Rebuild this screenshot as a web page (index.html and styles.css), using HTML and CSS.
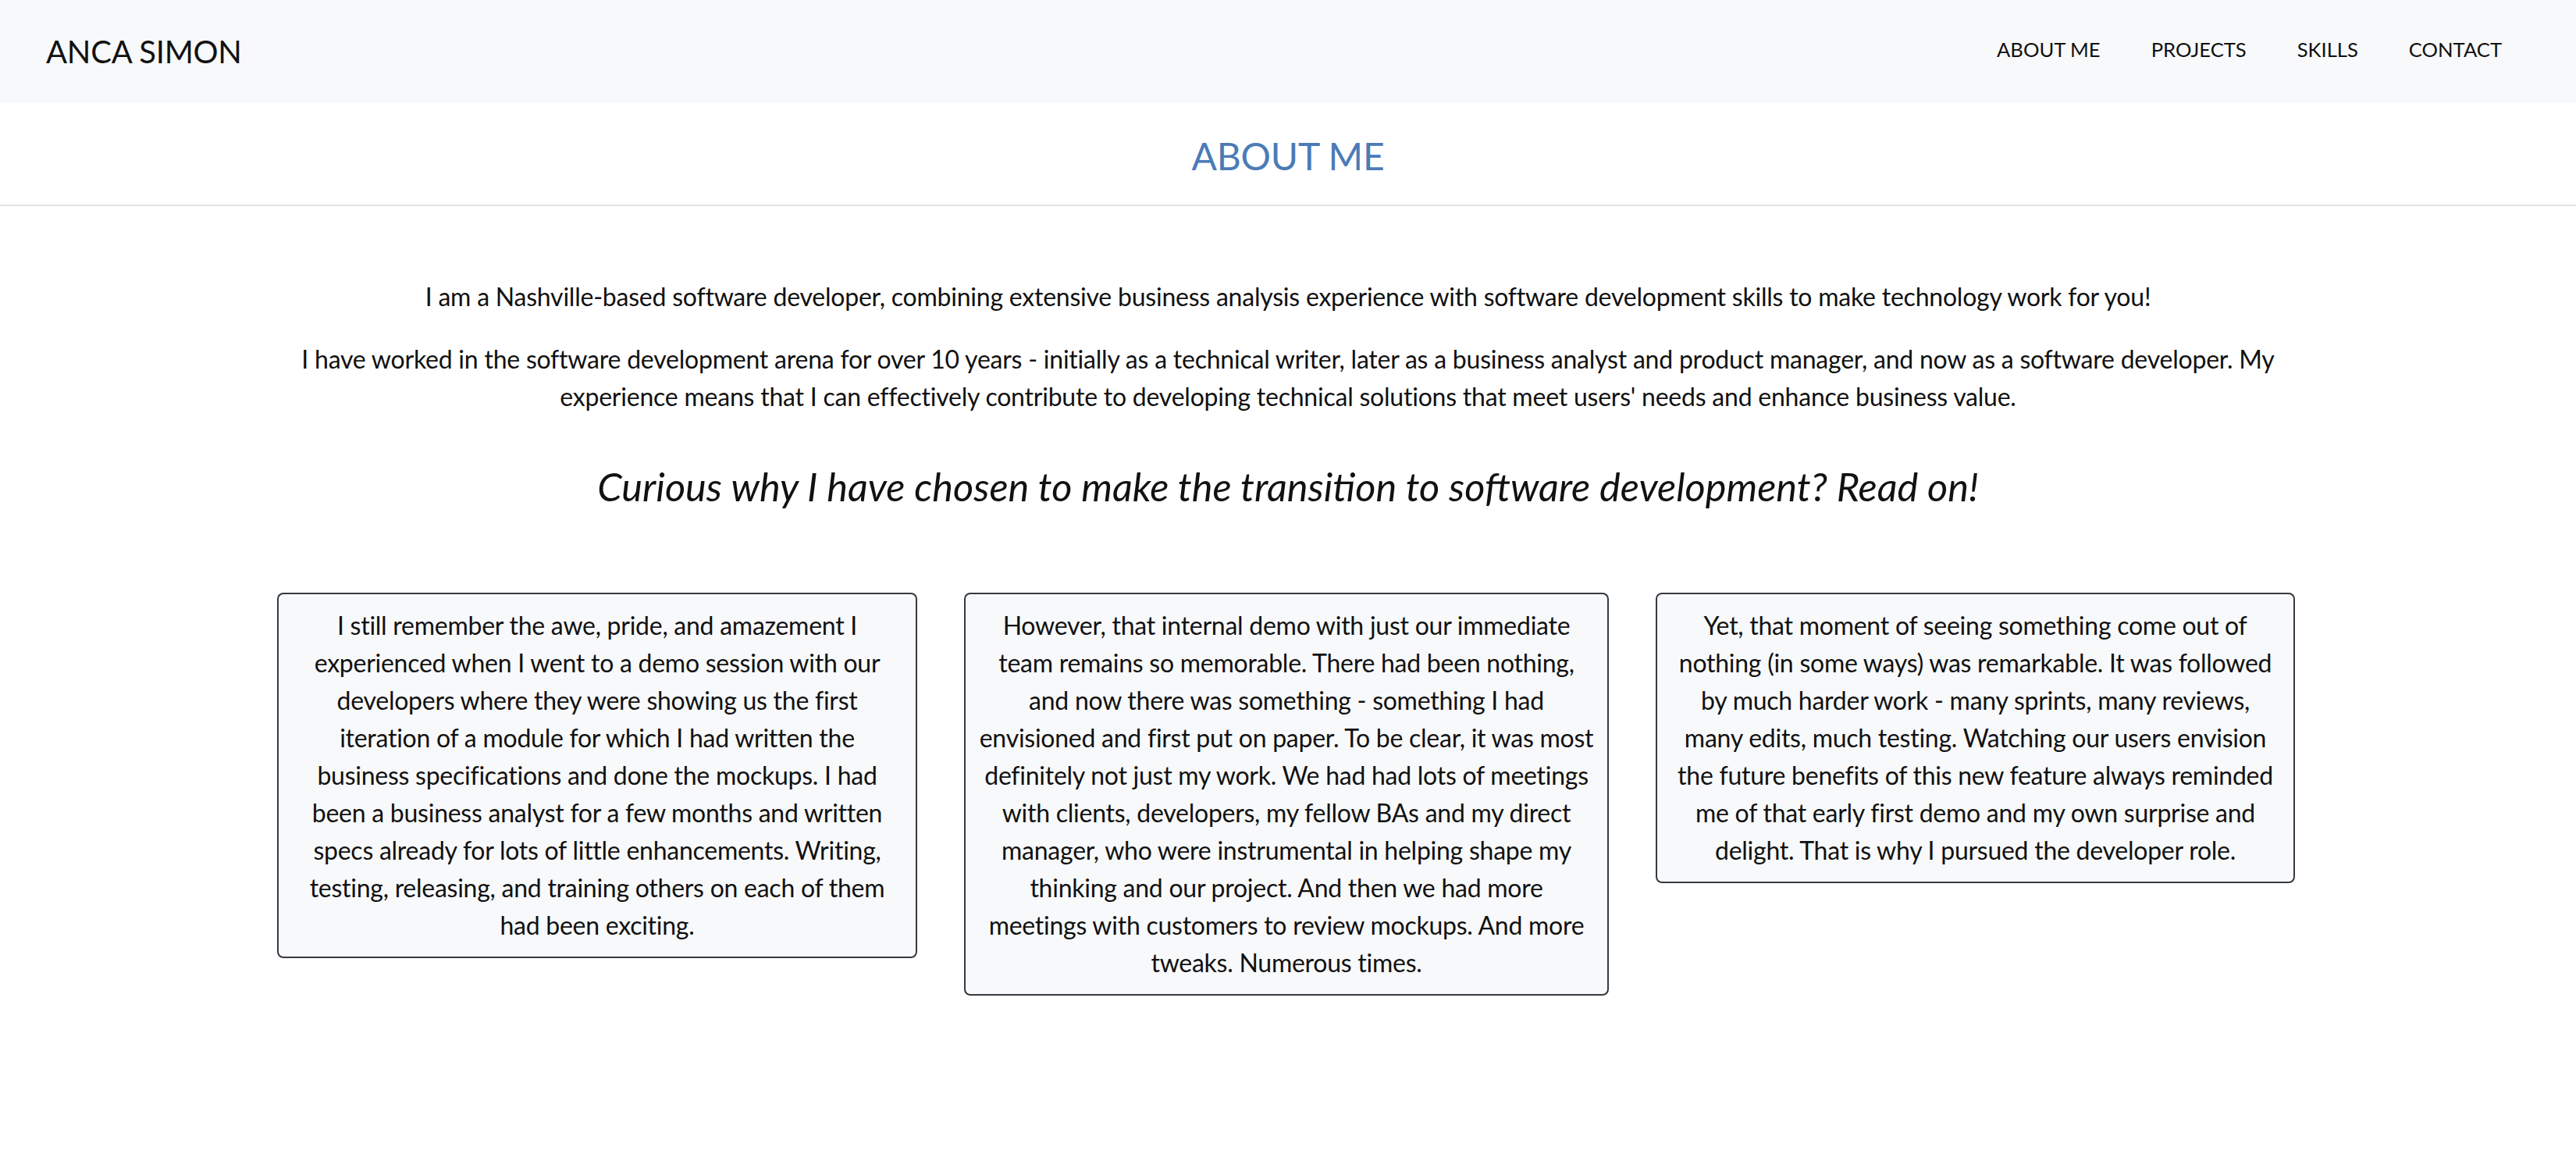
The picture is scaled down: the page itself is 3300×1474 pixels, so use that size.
FILE: index.html
```html
<!DOCTYPE html>
<html lang="en">
<head>
<meta charset="utf-8">
<title>Anca Simon - About Me</title>
<link rel="stylesheet" href="styles.css">
</head>
<body>
<header class="navbar">
  <a class="brand" href="#">ANCA SIMON</a>
  <nav class="nav">
    <a class="nav-link" href="#">ABOUT ME</a>
    <a class="nav-link" href="#">PROJECTS</a>
    <a class="nav-link" href="#">SKILLS</a>
    <a class="nav-link" href="#">CONTACT</a>
  </nav>
</header>
<section class="page-title">
  <h1 class="title">ABOUT ME</h1>
</section>
<main class="content">
  <p class="intro">I am a Nashville-based software developer, combining extensive business analysis experience with software development skills to make technology work for you!</p>
  <p class="intro">I have worked in the software development arena for over 10 years - initially as a technical writer, later as a business analyst and product manager, and now as a software developer. My experience means that I can effectively contribute to developing technical solutions that meet users' needs and enhance business value.</p>
  <h2 class="teaser">Curious why I have chosen to make the transition to software development? Read on!</h2>
  <div class="cards">
    <div class="card">I still remember the awe, pride, and amazement I experienced when I went to a demo session with our developers where they were showing us the first iteration of a module for which I had written the business specifications and done the mockups. I had been a business analyst for a few months and written specs already for lots of little enhancements. Writing, testing, releasing, and training others on each of them had been exciting.</div>
    <div class="card">However, that internal demo with just our immediate team remains so memorable. There had been nothing, and now there was something - something I had envisioned and first put on paper. To be clear, it was most definitely not just my work. We had had lots of meetings with clients, developers, my fellow BAs and my direct manager, who were instrumental in helping shape my thinking and our project. And then we had more meetings with customers to review mockups. And more tweaks. Numerous times.</div>
    <div class="card">Yet, that moment of seeing something come out of nothing (in some ways) was remarkable. It was followed by much harder work - many sprints, many reviews, many edits, much testing. Watching our users envision the future benefits of this new feature always reminded me of that early first demo and my own surprise and delight. That is why I pursued the developer role.</div>
  </div>
</main>
</body>
</html>
```

FILE: styles.css
```css
* { box-sizing: border-box; }
html, body { margin: 0; padding: 0; }
body {
  font-family: Lato, "Open Sans", sans-serif;
  font-size: 32px;
  line-height: 1.5;
  letter-spacing: -0.007em;
  color: #111;
  background: #fff;
}
a { text-decoration: none; color: inherit; }

.navbar {
  height: 132px;
  background: #f8f9fa;
  display: flex;
  align-items: center;
  justify-content: space-between;
  padding: 0 95px 0 59px;
}
.brand {
  font-size: 40px;
  line-height: 1.2;
  color: #111;
}
.nav {
  display: flex;
  gap: 65px;
  margin-bottom: 5px;
}
.nav-link {
  font-size: 25.6px;
  line-height: 1.2;
  letter-spacing: 0;
  color: #111;
}

.page-title {
  padding: 38px 0 32px;
  border-bottom: 2px solid #e5e5e5;
  text-align: center;
}
.title {
  margin: 0;
  font-size: 48px;
  font-weight: 400;
  line-height: 1.25;
  color: #4b7bb7;
}

.content {
  width: 2592px;
  margin: 0 auto;
  padding-top: 92px;
  text-align: center;
}
.intro {
  margin: 0 0 32px;
}
.intro + .intro { margin-bottom: 0; }
.teaser {
  margin: 61px 0 105px;
  font-size: 50.5px;
  font-style: italic;
  font-weight: 400;
  line-height: 1.2;
  letter-spacing: 0;
  color: #111;
}
.cards {
  display: grid;
  grid-template-columns: 820px 826px 819px;
  column-gap: 60px;
  justify-content: start;
  align-items: start;
  margin-left: 1px;
}
.card {
  background: #f8f9fa;
  border: 2px solid #343a40;
  border-radius: 8px;
  padding: 16px;
  letter-spacing: -0.008em;
  color: #111;
}
```
